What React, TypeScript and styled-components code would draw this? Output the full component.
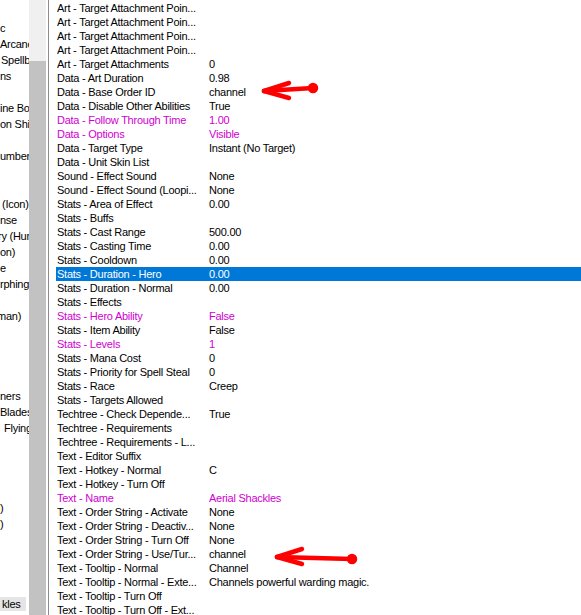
import * as React from "react";
import styled, { createGlobalStyle } from "styled-components";

const Global = createGlobalStyle`
  html, body {
    margin: 0;
    padding: 0;
    background: #ffffff;
    overflow: hidden;
  }
  body {
    font-family: "Liberation Sans", Arial, sans-serif;
    font-size: 11px;
    letter-spacing: -0.25px;
    color: #000000;
  }
`;

const Window = styled.div`
  position: relative;
  width: 581px;
  height: 615px;
  display: flex;
  overflow: hidden;
  background: #ffffff;
`;

const TreePane = styled.div`
  width: 29px;
  flex: none;
  overflow: hidden;
  padding-top: 20px;
  box-sizing: border-box;
`;

const TreeItem = styled.div<{ $x: number }>`
  height: 16px;
  line-height: 16px;
  white-space: nowrap;
  margin-left: ${(p) => p.$x}px;
`;

const TreeLabel = styled.span<{ $selected?: boolean }>`
  display: inline-block;
  line-height: 14px;
  padding: 0 5px 0 2px;
  margin-left: -2px;
  background: ${(p) => (p.$selected ? "#e5e5e5" : "transparent")};
`;

const Scrollbar = styled.div`
  width: 17px;
  flex: none;
  display: flex;
  flex-direction: column;
  background: #f0f0f0;
`;

const Thumb = styled.div`
  margin-top: 61px;
  flex: 1;
  background: #c2c2c2;
`;

const Splitter = styled.div`
  width: 2px;
  flex: none;
  border-right: 1px solid #8c8c8c;
`;

const GridPane = styled.div`
  flex: 1;
  padding: 1px 0 0 7px;
  display: flex;
  flex-direction: column;
`;

const Row = styled.div<{ $selected?: boolean; $modified?: boolean }>`
  display: grid;
  grid-template-columns: 152px 1fr;
  flex: none;
  height: 14px;
  line-height: 14px;
  padding-left: 1px;
  white-space: nowrap;
  background: ${(p) => (p.$selected ? "#0078d7" : "transparent")};
  color: ${(p) => (p.$selected ? "#ffffff" : p.$modified ? "#d000d0" : "#000000")};
`;

const Cell = styled.span`
  overflow: hidden;
`;

const Overlay = styled.svg`
  position: absolute;
  left: 0;
  top: 0;
  pointer-events: none;
`;

const tree: [number, number, string, boolean?][] = [
  [0, 0, "c"],
  [1, 0, "Arcane"],
  [2, 1, "Spellbook"],
  [3, 0, "ns"],
  [5, 0, "ine Book"],
  [6, 0, "on Shield"],
  [8, 0, "umber"],
  [11, 2, "(Icon)"],
  [12, 0, "nse"],
  [13, -2, "ry (Human)"],
  [14, 0, "on)"],
  [15, 0, "e"],
  [16, 0, "rphing"],
  [18, -3, "man)"],
  [23, 0, "ners"],
  [24, 0, "Blades"],
  [25, 4, "Flying"],
  [30, 0, ")"],
  [31, 0, ")"],
  [36, 2, "kles", true],
];

type Field = { name: string; value?: string; mod?: boolean; sel?: boolean };

const fields: Field[] = [
  { name: "Art - Target Attachment Poin..." },
  { name: "Art - Target Attachment Poin..." },
  { name: "Art - Target Attachment Poin..." },
  { name: "Art - Target Attachment Poin..." },
  { name: "Art - Target Attachments", value: "0" },
  { name: "Data - Art Duration", value: "0.98" },
  { name: "Data - Base Order ID", value: "channel" },
  { name: "Data - Disable Other Abilities", value: "True" },
  { name: "Data - Follow Through Time", value: "1.00", mod: true },
  { name: "Data - Options", value: "Visible", mod: true },
  { name: "Data - Target Type", value: "Instant (No Target)" },
  { name: "Data - Unit Skin List" },
  { name: "Sound - Effect Sound", value: "None" },
  { name: "Sound - Effect Sound (Loopi...", value: "None" },
  { name: "Stats - Area of Effect", value: "0.00" },
  { name: "Stats - Buffs" },
  { name: "Stats - Cast Range", value: "500.00" },
  { name: "Stats - Casting Time", value: "0.00" },
  { name: "Stats - Cooldown", value: "0.00" },
  { name: "Stats - Duration - Hero", value: "0.00", sel: true },
  { name: "Stats - Duration - Normal", value: "0.00" },
  { name: "Stats - Effects" },
  { name: "Stats - Hero Ability", value: "False", mod: true },
  { name: "Stats - Item Ability", value: "False" },
  { name: "Stats - Levels", value: "1", mod: true },
  { name: "Stats - Mana Cost", value: "0" },
  { name: "Stats - Priority for Spell Steal", value: "0" },
  { name: "Stats - Race", value: "Creep" },
  { name: "Stats - Targets Allowed" },
  { name: "Techtree - Check Depende...", value: "True" },
  { name: "Techtree - Requirements" },
  { name: "Techtree - Requirements - L..." },
  { name: "Text - Editor Suffix" },
  { name: "Text - Hotkey - Normal", value: "C" },
  { name: "Text - Hotkey - Turn Off" },
  { name: "Text - Name", value: "Aerial Shackles", mod: true },
  { name: "Text - Order String - Activate", value: "None" },
  { name: "Text - Order String - Deactiv...", value: "None" },
  { name: "Text - Order String - Turn Off", value: "None" },
  { name: "Text - Order String - Use/Tur...", value: "channel" },
  { name: "Text - Tooltip - Normal", value: "Channel" },
  { name: "Text - Tooltip - Normal - Exte...", value: "Channels powerful warding magic." },
  { name: "Text - Tooltip - Turn Off" },
  { name: "Text - Tooltip - Turn Off - Ext..." },
];

const Arrow = ({ tip, tail }: { tip: [number, number]; tail: [number, number] }) => {
  const [tx, ty] = tip;
  const [ex, ey] = tail;
  return (
    <g stroke="#ff0000" strokeWidth={4.5} strokeLinecap="round" fill="none">
      <line x1={tx} y1={ty} x2={ex} y2={ey} />
      <line x1={tx} y1={ty} x2={tx + 25} y2={ty - 8} />
      <line x1={tx} y1={ty} x2={tx + 25} y2={ty + 7} />
      <circle cx={ex} cy={ey} r={3} fill="#ff0000" />
    </g>
  );
};

export default function App() {
  const rows: React.ReactNode[] = [];
  for (let i = 0; i <= 36; i++) {
    const t = tree.find((x) => x[0] === i);
    rows.push(
      <TreeItem key={i} $x={t ? t[1] : 0}>
        {t ? <TreeLabel $selected={t[3]}>{t[2]}</TreeLabel> : null}
      </TreeItem>
    );
  }
  return (
    <Window>
      <Global />
      <TreePane>{rows}</TreePane>
      <Scrollbar>
        <Thumb />
      </Scrollbar>
      <Splitter />
      <GridPane>
        {fields.map((f, i) => (
          <Row key={i} $selected={f.sel} $modified={f.mod}>
            <Cell>{f.name}</Cell>
            <Cell>{f.value ?? ""}</Cell>
          </Row>
        ))}
      </GridPane>
      <Overlay width={581} height={615} viewBox="0 0 581 615">
        <Arrow tip={[264, 91]} tail={[313, 88]} />
        <Arrow tip={[277, 557]} tail={[352, 559]} />
      </Overlay>
    </Window>
  );
}
